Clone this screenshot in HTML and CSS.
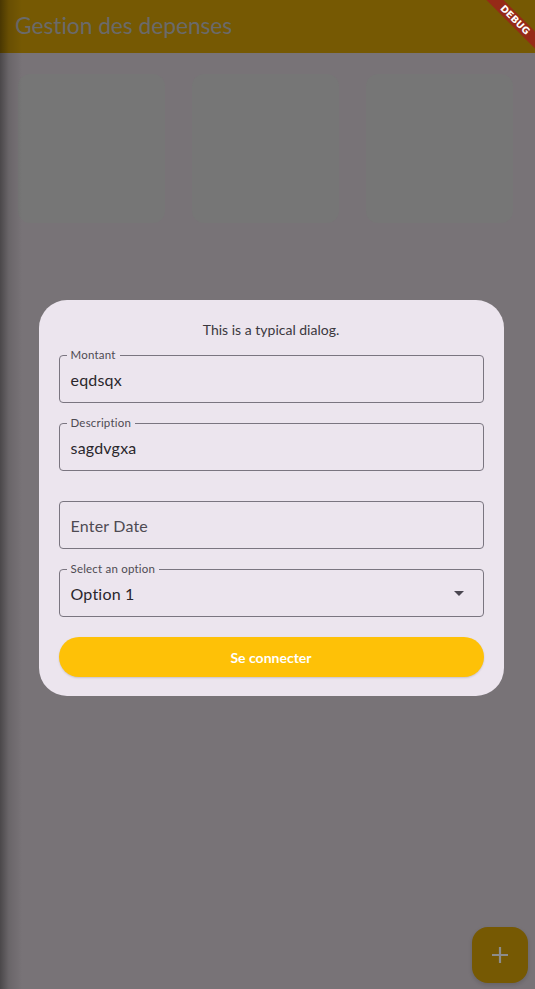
FILE: index.html
```html
<!DOCTYPE html>
<html lang="fr">
<head>
<meta charset="utf-8">
<title>Gestion des depenses</title>
<link rel="stylesheet" href="styles.css">
</head>
<body>
<div class="screen">
  <header class="appbar">
    <h1 class="title">Gestion des depenses</h1>
  </header>
  <main class="content">
    <div class="cards">
      <div class="card"></div>
      <div class="card"></div>
      <div class="card"></div>
    </div>
  </main>
  <button class="fab" aria-label="Ajouter">
    <svg width="18" height="18" viewBox="0 0 18 18"><path d="M9 1v16M1 9h16" stroke="#8c8c8c" stroke-width="2.2" fill="none"/></svg>
  </button>
  <div class="edge-shadow"></div>
  <div class="overlay">
    <div class="dialog">
      <p class="dialog-text">This is a typical dialog.</p>
      <div class="field">
        <span class="field-label">Montant</span>
        <span class="field-value">eqdsqx</span>
      </div>
      <div class="field">
        <span class="field-label">Description</span>
        <span class="field-value">sagdvgxa</span>
      </div>
      <div class="field field-spaced">
        <span class="field-placeholder">Enter Date</span>
      </div>
      <div class="field">
        <span class="field-label">Select an option</span>
        <span class="field-value">Option 1</span>
        <svg class="caret" width="10" height="5" viewBox="0 0 10 5"><path d="M0 0h10L5 5z" fill="#4a4650"/></svg>
      </div>
      <button class="btn">Se connecter</button>
    </div>
  </div>
  <div class="debug"><span>DEBUG</span></div>
</div>
</body>
</html>
```
FILE: styles.css
```css
* { box-sizing: border-box; }
html, body { margin: 0; padding: 0; }
body {
  font-family: "Lato", "Noto Sans", sans-serif;
  background: #787377;
}
.screen {
  position: relative;
  width: 535px;
  height: 989px;
  overflow: hidden;
  background: #787377;
}
.appbar {
  height: 53px;
  background: #765903;
  display: flex;
  align-items: center;
  padding-left: 15px;
}
.title {
  margin: 0;
  font-weight: 400;
  font-size: 22.8px;
  color: #6a6a6a;
  letter-spacing: -0.05px;
  padding-bottom: 4px;
}
.content {
  padding: 21px 23px 0 18px;
}
.cards {
  display: grid;
  grid-template-columns: repeat(3, 147px);
  column-gap: 27px;
}
.card {
  height: 149px;
  border-radius: 12px;
  background: #767676;
}
.fab {
  position: absolute;
  left: 472px;
  top: 927px;
  width: 56px;
  height: 56px;
  border: none;
  border-radius: 16px;
  background: #765903;
  display: flex;
  align-items: center;
  justify-content: center;
  box-shadow: 0 2px 4px rgba(0,0,0,0.15);
  padding: 0;
}
.edge-shadow {
  position: absolute;
  left: 0;
  top: 0;
  bottom: 0;
  width: 22px;
  background: linear-gradient(to right, rgba(0,0,0,0.38), rgba(0,0,0,0.12) 40%, rgba(0,0,0,0));
}
.overlay {
  position: absolute;
  inset: 0;
  display: flex;
  justify-content: center;
  align-items: flex-start;
  padding-top: 300px;
}
.dialog {
  width: 465px;
  margin-left: 7px;
  background: #ece5ee;
  border-radius: 28px;
  padding: 20px 20px 19px 20px;
  display: flex;
  flex-direction: column;
}
.dialog-text {
  margin: 0 0 15px 0;
  text-align: center;
  font-size: 14px;
  line-height: 20px;
  color: #3a373d;
}
.field {
  position: relative;
  height: 48px;
  border: 1px solid #7a7580;
  border-radius: 4px;
  display: flex;
  align-items: center;
  padding: 0 11px;
  margin-bottom: 20px;
}
.field-spaced { margin-top: 10px; }
.field-label {
  position: absolute;
  left: 7px;
  top: -8px;
  padding: 0 4px;
  background: #ece5ee;
  font-size: 11.5px;
  line-height: 14px;
  color: #4e4a52;
  letter-spacing: 0.2px;
}
.field-value {
  font-size: 16px;
  color: #2a272c;
  letter-spacing: 0.2px;
}
.field-placeholder {
  font-size: 16px;
  color: #4e4a52;
  letter-spacing: 0.2px;
}
.caret {
  margin-left: auto;
  margin-right: 8px;
}
.btn {
  height: 40px;
  border: none;
  border-radius: 20px;
  background: #fec107;
  color: #ffffff;
  font-family: inherit;
  font-size: 14px;
  font-weight: 700;
  box-shadow: 0 1px 2px rgba(0,0,0,0.15);
}
.debug {
  position: absolute;
  top: 14px;
  right: -30px;
  width: 100px;
  height: 12px;
  background: #962a17;
  transform: rotate(45deg);
  display: flex;
  align-items: center;
  justify-content: center;
}
.debug span {
  color: #ffffff;
  font-family: "DejaVu Sans", sans-serif;
  font-weight: 700;
  font-size: 9.5px;
  line-height: 12px;
}
```
